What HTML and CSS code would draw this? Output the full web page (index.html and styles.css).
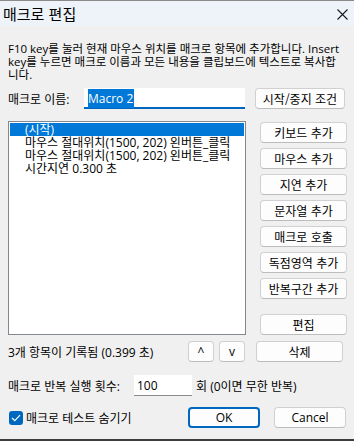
FILE: index.html
```html
<!DOCTYPE html>
<html lang="ko">
<head>
    <meta charset="UTF-8">
    <title>매크로 편집</title>
    <link rel="stylesheet" href="styles.css">
</head>
<body>
    <div class="window">
        <div class="titlebar">
            <span class="title">매크로 편집</span>
            <svg class="close" width="11" height="11" viewBox="0 0 11 11">
                <path d="M0.5 0.5 L10.5 10.5 M10.5 0.5 L0.5 10.5" stroke="#1a1a1a" stroke-width="1.1" fill="none"/>
            </svg>
        </div>

        <div class="content">
            <p class="desc">F10 key를 눌러 현재 마우스 위치를 매크로 항목에 추가합니다. Insert<br>key를 누르면 매크로 이름과 모든 내용을 클립보드에 텍스트로 복사합<br>니다.</p>

            <div class="name-row">
                <span class="label">매크로 이름:</span>
                <div class="name-input"><span class="sel">Macro 2</span></div>
                <button class="btn btn-cond">시작/중지 조건</button>
            </div>

            <div class="main">
                <div class="list">
                    <div class="item selected">(시작)</div>
                    <div class="item">마우스 절대위치(1500, 202) 왼버튼_클릭</div>
                    <div class="item">마우스 절대위치(1500, 202) 왼버튼_클릭</div>
                    <div class="item">시간지연 0.300 초</div>
                </div>
                <div class="side">
                    <button class="btn">키보드 추가</button>
                    <button class="btn">마우스 추가</button>
                    <button class="btn">지연 추가</button>
                    <button class="btn">문자열 추가</button>
                    <button class="btn">매크로 호출</button>
                    <button class="btn">독점영역 추가</button>
                    <button class="btn">반복구간 추가</button>
                    <button class="btn btn-edit">편집</button>
                </div>
            </div>

            <div class="status-row">
                <span class="status">3개 항목이 기록됨 (0.399 초)</span>
                <button class="btn btn-arrow">^</button>
                <button class="btn btn-arrow">v</button>
                <button class="btn btn-side">삭제</button>
            </div>

            <div class="repeat-row">
                <span class="label">매크로 반복 실행 횟수:</span>
                <div class="count-input">100</div>
                <span class="note">회 (0이면 무한 반복)</span>
            </div>

            <div class="footer">
                <span class="check">
                    <svg width="10" height="8" viewBox="0 0 10 8">
                        <path d="M1 4 L3.8 6.6 L9 1.2" stroke="#fff" stroke-width="1.2" fill="none"/>
                    </svg>
                </span>
                <span class="check-label">매크로 테스트 숨기기</span>
                <button class="btn btn-ok">OK</button>
                <button class="btn btn-cancel">Cancel</button>
            </div>
        </div>
    </div>
</body>
</html>
```

FILE: styles.css
```css
* {
    margin: 0;
    padding: 0;
    box-sizing: border-box;
}

body {
    font-family: 'Open Sans', 'Noto Sans CJK KR', sans-serif;
    font-size: 12px;
    color: #000;
    background: #f0f0f0;
}

.window {
    width: 354px;
    height: 441px;
    display: flex;
    flex-direction: column;
    background: #f0f0f0;
    border-top: 1px solid #8a8a8a;
    border-bottom: 2px solid #3c3c3c;
}

.titlebar {
    height: 25px;
    flex-shrink: 0;
    display: flex;
    align-items: center;
    justify-content: space-between;
    background: #eef2f9;
    padding: 0 6px 0 3px;
}

.title {
    font-size: 15px;
    font-family: 'Noto Sans CJK KR', sans-serif;
}

.close {
    margin-top: 1px;
}

.content {
    padding: 16px 6px 0 8px;
}

.desc {
    font-size: 11.5px;
    line-height: 13px;
    white-space: nowrap;
}

.name-row {
    display: flex;
    align-items: center;
    height: 21px;
    margin-top: 7px;
}

.label {
    width: 76px;
}

.name-input {
    width: 161px;
    height: 21px;
    background: #fff;
    border-bottom: 2px solid #0067c0;
    padding: 2px 0 0 4px;
}

.sel {
    background: #0078d7;
    color: #fff;
    padding: 1px 1px 1px 0;
}

.btn {
    font-family: 'Noto Sans CJK KR', 'Open Sans', sans-serif;
    font-size: 12px;
    height: 21px;
    background: #fdfdfd;
    border: 1px solid #d0d0d0;
    border-bottom-color: #bcbcbc;
    border-radius: 4px;
    color: #000;
}

.btn-cond {
    width: 90px;
    margin-left: 10px;
}

.main {
    display: flex;
    margin-top: 12px;
}

.list {
    width: 238px;
    height: 214px;
    background: #fff;
    border: 1px solid #828790;
    padding: 1px 1px;
}

.item {
    height: 13px;
    line-height: 13px;
    padding-left: 15px;
    white-space: nowrap;
}

.selected {
    background: #0078d7;
    color: #fff;
}

.side {
    display: flex;
    flex-direction: column;
    gap: 5px;
    margin-left: 14px;
    padding-top: 1px;
}

.side .btn {
    width: 87px;
}

.side .btn-edit {
    margin-top: 10px;
}

.status-row {
    display: flex;
    align-items: center;
    height: 21px;
    margin-top: 6px;
}

.status {
    width: 180px;
}

.btn-arrow {
    width: 26px;
    margin-right: 5px;
    font-family: 'Open Sans', sans-serif;
}

.btn-side {
    width: 87px;
    margin-left: 6px;
}

.repeat-row {
    display: flex;
    align-items: center;
    height: 21px;
    margin-top: 13px;
}

.repeat-row .label {
    width: 126px;
}

.count-input {
    width: 58px;
    height: 21px;
    background: #fff;
    border-bottom: 1px solid #8a8a8a;
    padding: 2px 0 0 3px;
}

.note {
    margin-left: 4px;
}

.footer {
    display: flex;
    align-items: center;
    height: 21px;
    margin-top: 11px;
}

.check {
    width: 14px;
    height: 14px;
    border-radius: 3px;
    background: #0067c0;
    display: flex;
    align-items: center;
    justify-content: center;
    margin-left: 1px;
}

.check-label {
    margin-left: 3px;
    width: 162px;
}

.btn-ok {
    width: 72px;
    border: 2px solid #0067c0;
    font-family: 'Open Sans', sans-serif;
}

.btn-cancel {
    width: 72px;
    margin-left: 14px;
    font-family: 'Open Sans', sans-serif;
}
```
